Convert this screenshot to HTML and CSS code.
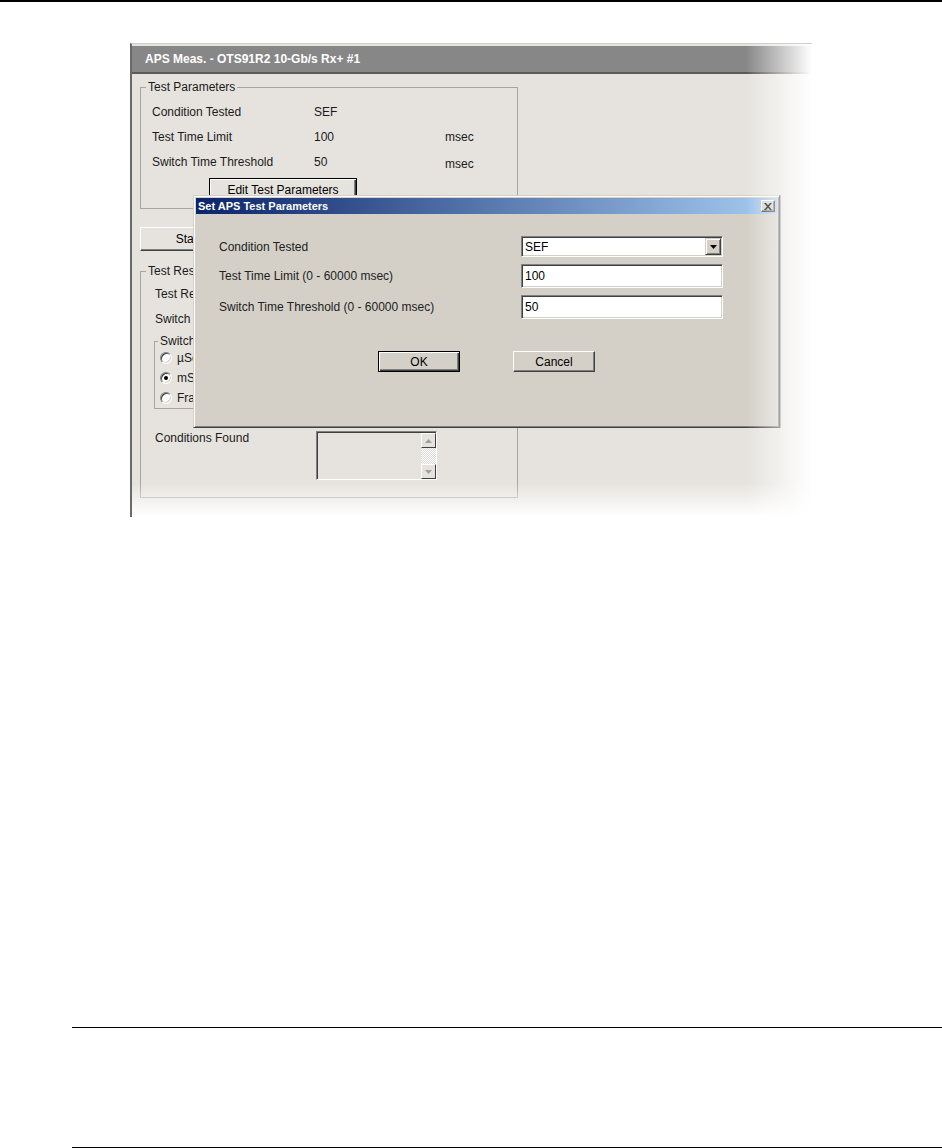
FILE: index.html
```html
<!DOCTYPE html>
<html lang="en">
<head>
  <meta charset="UTF-8" />
  <title>APS Measurement - Set Test Parameters</title>
  <link rel="stylesheet" href="styles.css">
</head>
<body>

  <div class="page-rule"></div>

  <!-- Screenshot of the APS window -->
  <div class="shot">
    <div class="app-title">APS Meas. - OTS91R2 10-Gb/s Rx+ #1</div>

    <div class="app-body">
      <fieldset class="group params">
        <legend>Test Parameters</legend>
        <div class="param-grid">
          <span>Condition Tested</span><span>SEF</span><span></span>
          <span>Test Time Limit</span><span>100</span><span>msec</span>
          <span>Switch Time Threshold</span><span>50</span><span class="unit-low">msec</span>
        </div>
        <button class="btn btn-default edit-btn">Edit Test Parameters</button>
      </fieldset>

      <button class="btn start-btn">Start Test</button>

      <fieldset class="group results">
        <legend>Test Results</legend>
        <div class="result-row">Test Result</div>
        <div class="result-row">Switch Time</div>

        <fieldset class="group units">
          <legend>Switch Time Units</legend>
          <div class="radio"><span class="radio-dot"></span>µSec</div>
          <div class="radio"><span class="radio-dot checked"></span>mSec</div>
          <div class="radio"><span class="radio-dot"></span>Frames</div>
        </fieldset>

        <div class="found-row">
          <span class="found-label">Conditions Found</span>
          <div class="listbox">
            <div class="scrollbar">
              <div class="scroll-btn">
                <svg width="7" height="4" viewBox="0 0 7 4"><polygon points="3.5,0 7,4 0,4" fill="#a0a0a0"/></svg>
              </div>
              <div class="scroll-track"></div>
              <div class="scroll-btn">
                <svg width="7" height="4" viewBox="0 0 7 4"><polygon points="0,0 7,0 3.5,4" fill="#a0a0a0"/></svg>
              </div>
            </div>
          </div>
        </div>
      </fieldset>
    </div>

    <!-- Modal dialog over the window -->
    <div class="dialog">
      <div class="dialog-title">
        <span>Set APS Test Parameters</span>
        <div class="close-btn">
          <svg width="8" height="7" viewBox="0 0 8 7"><path d="M0 0H2L4 2.3L6 0H8L5 3.5L8 7H6L4 4.7L2 7H0L3 3.5Z" fill="#000"/></svg>
        </div>
      </div>

      <div class="dialog-form">
        <span class="form-label">Condition Tested</span>
        <div class="field combo">
          <span class="field-text">SEF</span>
          <div class="combo-btn">
            <svg width="7" height="4" viewBox="0 0 7 4"><polygon points="0,0 7,0 3.5,4" fill="#000"/></svg>
          </div>
        </div>

        <span class="form-label">Test Time Limit (0 - 60000 msec)</span>
        <div class="field"><span class="field-text">100</span></div>

        <span class="form-label">Switch Time Threshold (0 - 60000 msec)</span>
        <div class="field"><span class="field-text">50</span></div>
      </div>

      <div class="dialog-buttons">
        <button class="btn btn-default dlg-btn">OK</button>
        <button class="btn dlg-btn">Cancel</button>
      </div>
    </div>

    <div class="fade-right"></div>
    <div class="fade-bottom"></div>
  </div>

  <div class="page-foot">
    <div class="foot-rule"></div>
    <div class="foot-rule second"></div>
  </div>

</body>
</html>
```

FILE: styles.css
```css
body {
  margin: 0;
  padding: 0;
  background: #fff;
  font-family: "Liberation Sans", Arial, sans-serif;
  font-size: 12px;
  color: #1a1a1a;
}

.page-rule {
  height: 2px;
  background: #000;
}

/* screenshot frame */
.shot {
  position: relative;
  margin: 41px 0 0 130px;
  width: 682px;
  height: 474px;
  box-sizing: border-box;
  background: #e6e3de;
  border-top: 1px solid #cfcfcf;
  border-left: 2px solid #6a6a6a;
  overflow: hidden;
}

.app-title {
  margin-top: 2px;
  height: 26px;
  line-height: 26px;
  padding-left: 13px;
  background: #878787;
  border-bottom: 2px solid #5a5a5a;
  color: #fff;
  font-weight: bold;
  font-size: 12px;
}

.app-body {
  padding: 6px 0 0 8px;
}

.group {
  margin: 0;
  min-width: 0;
  border: 1px solid #a6a5a1;
  box-sizing: border-box;
}

.group legend {
  padding: 0 2px;
  line-height: 14px;
}

.params {
  width: 378px;
  padding: 5px 0 6px 11px;
}

.params legend {
  margin-left: -6px;
}

.param-grid {
  display: grid;
  grid-template-columns: 162px 131px auto;
  grid-auto-rows: 25px;
  align-items: center;
}

.unit-low {
  padding-top: 4px;
}

/* classic buttons */
.btn {
  display: block;
  box-sizing: border-box;
  padding: 0;
  font-family: inherit;
  font-size: 12px;
  color: #000;
  background: #e6e3de;
  border: 1px solid;
  border-color: #fff #404040 #404040 #fff;
  box-shadow: inset -1px -1px 0 #808080;
}

.btn-default {
  border: 1px solid #000;
  box-shadow: inset 1px 1px 0 #fff, inset -1px -1px 0 #404040, inset -2px -2px 0 #808080;
}

.edit-btn {
  margin: 4px 0 0 57px;
  width: 148px;
  height: 24px;
}

.start-btn {
  margin-top: 18px;
  width: 122px;
  height: 24px;
}

.results {
  width: 378px;
  margin-top: 13px;
  padding: 4px 0 17px 14px;
}

.results > legend {
  margin-left: -9px;
}

.result-row {
  height: 25px;
  line-height: 25px;
}

.units {
  width: 170px;
  margin: 2px 0 0 -1px;
  padding: 0 0 0 5px;
}

.units legend {
  margin-left: -2px;
}

.radio {
  display: flex;
  align-items: center;
  gap: 5px;
  height: 20px;
}

.radio-dot {
  position: relative;
  width: 12px;
  height: 12px;
  box-sizing: border-box;
  border-radius: 50%;
  background: #fff;
  border: 1px solid;
  border-color: #808080 #fff #fff #808080;
  box-shadow: inset 1px 1px 0 #404040, inset -1px -1px 0 #d4d0c8;
}

.radio-dot.checked::after {
  content: "";
  position: absolute;
  left: 3px;
  top: 3px;
  width: 4px;
  height: 4px;
  border-radius: 50%;
  background: #000;
}

.found-row {
  display: flex;
  align-items: flex-start;
  margin-top: 22px;
}

.found-label {
  width: 161px;
  line-height: 14px;
}

.listbox {
  display: flex;
  justify-content: flex-end;
  width: 121px;
  height: 49px;
  box-sizing: border-box;
  border: 1px solid;
  border-color: #808080 #fff #fff #808080;
  box-shadow: inset 1px 1px 0 #404040;
  padding: 1px 0 0 0;
}

.scrollbar {
  display: flex;
  flex-direction: column;
  width: 15px;
}

.scroll-btn {
  display: flex;
  align-items: center;
  justify-content: center;
  height: 13px;
  background: #e6e3de;
  border: 1px solid;
  border-color: #fff #404040 #404040 #fff;
}

.scroll-track {
  flex: 1;
  background: repeating-conic-gradient(#fff 0 25%, #dcd9d4 0 50%) 0 0 / 2px 2px;
}

/* dialog */
.dialog {
  position: absolute;
  left: 61px;
  top: 151px;
  width: 587px;
  height: 233px;
  box-sizing: border-box;
  padding: 2px;
  background: #d4d0c8;
  border: 1px solid;
  border-color: #d4d0c8 #404040 #404040 #d4d0c8;
  box-shadow: inset 1px 1px 0 #fff, inset -1px -1px 0 #808080, 1px 0 0 #9a9a9a;
}

.dialog-title {
  display: flex;
  align-items: center;
  justify-content: space-between;
  height: 16px;
  padding: 0 2px;
  background: linear-gradient(to right, #0a246a, #a6caf0);
  color: #fff;
  font-weight: bold;
  font-size: 11px;
}

.close-btn {
  display: flex;
  align-items: center;
  justify-content: center;
  width: 14px;
  height: 12px;
  box-sizing: border-box;
  background: #d4d0c8;
  border: 1px solid;
  border-color: #fff #404040 #404040 #fff;
  box-shadow: inset -1px -1px 0 #808080;
}

.dialog-form {
  display: grid;
  grid-template-columns: 302px 202px;
  grid-template-rows: 21px 24px 24px;
  row-gap: 7px;
  align-items: center;
  margin-top: 22px;
  padding-left: 23px;
}

.form-label {
  color: #222;
}

.field {
  display: flex;
  align-items: center;
  height: 100%;
  box-sizing: border-box;
  background: #fff;
  border: 1px solid;
  border-color: #808080 #fff #fff #808080;
  box-shadow: inset 1px 1px 0 #404040, inset -1px -1px 0 #d4d0c8;
}

.field-text {
  flex: 1;
  padding-left: 3px;
  color: #000;
}

.combo-btn {
  display: flex;
  align-items: center;
  justify-content: center;
  width: 16px;
  height: 17px;
  margin-right: 1px;
  box-sizing: border-box;
  background: #d4d0c8;
  border: 1px solid;
  border-color: #d4d0c8 #404040 #404040 #d4d0c8;
  box-shadow: inset 1px 1px 0 #fff, inset -1px -1px 0 #808080;
}

.dialog-buttons {
  display: flex;
  justify-content: center;
  gap: 53px;
  margin-top: 32px;
}

.dlg-btn {
  width: 82px;
  height: 21px;
  background: #d4d0c8;
}

/* soft fade of the screenshot edges */
.fade-right {
  position: absolute;
  top: 0;
  right: 0;
  width: 66px;
  height: 100%;
  background: linear-gradient(to right, rgba(255, 255, 255, 0), #fff);
}

.fade-bottom {
  position: absolute;
  left: 0;
  bottom: 0;
  width: 100%;
  height: 34px;
  background: linear-gradient(to bottom, rgba(255, 255, 255, 0), #fff);
}

.page-foot {
  margin-top: 510px;
  padding-left: 72px;
}

.foot-rule {
  height: 1px;
  background: #000;
}

.foot-rule.second {
  margin-top: 119px;
}
```
